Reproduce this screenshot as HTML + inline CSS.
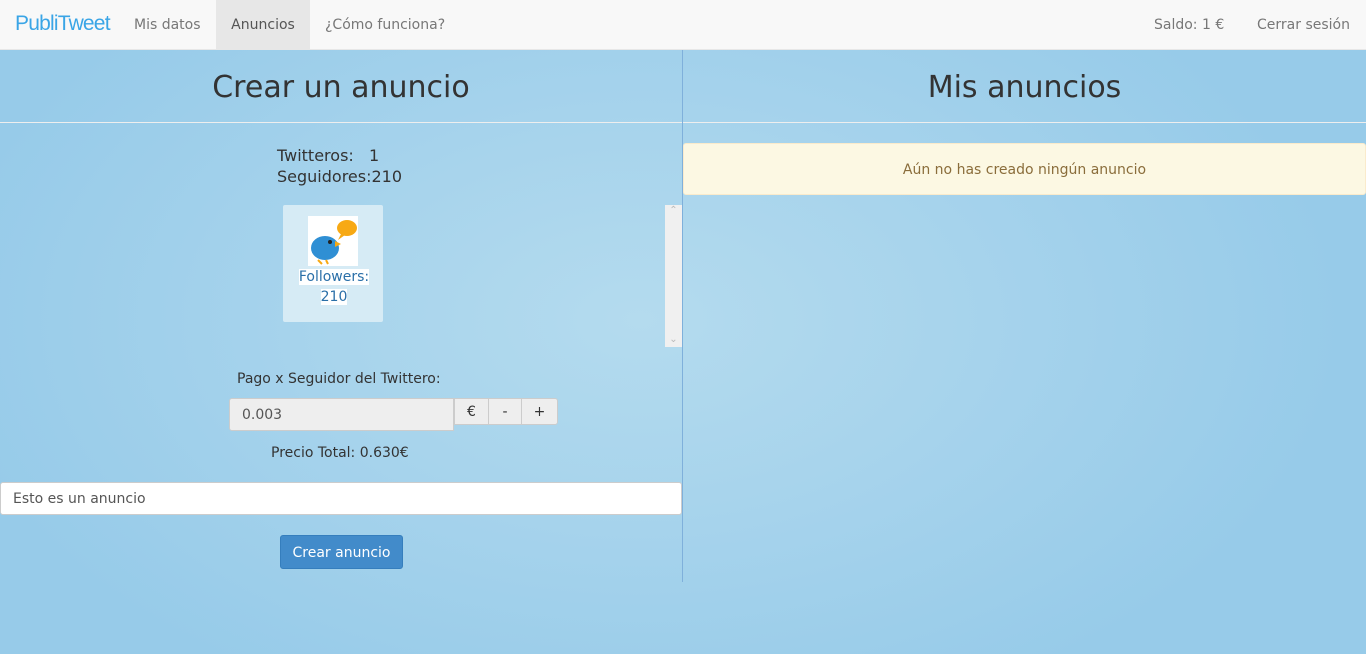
<!DOCTYPE html>
<html><head><meta charset="utf-8"><style>
*{box-sizing:border-box;margin:0;padding:0}
body{width:1366px;height:654px;overflow:hidden;font-family:"DejaVu Sans",sans-serif;color:#333;
background:radial-gradient(ellipse 700px 420px at 640px 320px,#b4dbee 0%,#a6d3ec 50%,#97cbe9 100%);position:relative}
.nav{position:absolute;top:0;left:0;width:1366px;height:50px;background:#f8f8f8;border-bottom:1px solid #e7e7e7;font-size:14px;color:#777}
.nav span{position:absolute;top:17px}
.logo{left:15px;top:12px!important;font-family:"Liberation Sans",sans-serif;font-size:21px;color:#3aa5e6;letter-spacing:-0.8px}
.act{left:216px;width:94px;height:49px;background:#e7e7e7;top:0!important;color:#555;text-align:center;line-height:50px}
h1{position:absolute;font-weight:normal;font-size:30px;color:#333;top:70px}
.hr{position:absolute;top:122px;left:0;width:1366px;height:1px;background:#eee}
.vr{position:absolute;left:682px;top:50px;width:1px;height:532px;background:#7fb0db}
</style></head><body>
<div class="nav">
<span class="logo">PubliTweet</span>
<span style="left:134px">Mis datos</span>
<span class="act">Anuncios</span>
<span style="left:325px">¿Cómo funciona?</span>
<span style="left:1154px">Saldo: 1 €</span>
<span style="left:1257px">Cerrar sesión</span>
</div>
<h1 style="left:0;width:682px;text-align:center">Crear un anuncio</h1>
<h1 style="left:683px;width:683px;text-align:center">Mis anuncios</h1>
<div class="hr"></div>
<div class="vr"></div>
<div style="position:absolute;left:277px;top:145px;font-size:16px;line-height:21px">Twitteros:&nbsp;&nbsp;&nbsp;1<br>Seguidores:210</div>
<div style="position:absolute;left:283px;top:205px;width:100px;height:117px;background:#d6ebf5;border-radius:2px"></div>
<svg style="position:absolute;left:308px;top:216px" width="50" height="50"><rect width="50" height="50" fill="#fff"/><ellipse cx="39" cy="12" rx="10" ry="8" fill="#f7a914"/><path d="M33 18 L30 24 L37 19Z" fill="#f7a914"/><ellipse cx="17" cy="32" rx="14" ry="12" fill="#2f8fd4"/><circle cx="22" cy="26" r="2" fill="#222"/><path d="M27 25 L33 28 L27 31Z" fill="#f7a914"/><path d="M10 44 L14 48 M18 44 L20 48" stroke="#f7a914" stroke-width="2"/></svg>
<div style="position:absolute;left:294px;top:267px;width:80px;font-size:14px;color:#2a6fa8;text-align:center;line-height:20px"><span style="background:#fff">Followers:</span><br><span style="background:#fff">210</span></div>
<div style="position:absolute;left:665px;top:205px;width:17px;height:142px;background:#f0f0f0;color:#bbb;font-size:10px;text-align:center">⌃<div style="position:absolute;bottom:2px;width:17px">⌄</div></div>
<div style="position:absolute;left:237px;top:371px;font-size:14px">Pago x Seguidor del Twittero:</div>
<div style="position:absolute;left:229px;top:398px;width:225px;height:33px;background:#eee;border:1px solid #ccc;border-radius:3px 0 0 3px;font-size:14px;color:#555;padding:8px 12px">0.003</div>
<div style="position:absolute;left:454px;top:398px;width:104px;height:27px;background:#eee;border:1px solid #ccc;border-radius:0 3px 3px 0;font-size:14px;display:flex">
<div style="width:34px;text-align:center;line-height:26px;border-right:1px solid #ccc">€</div><div style="width:33px;text-align:center;line-height:26px;border-right:1px solid #ccc">-</div><div style="flex:1;text-align:center;line-height:26px">+</div></div>
<div style="position:absolute;left:271px;top:445px;font-size:14px">Precio Total: 0.630€</div>
<div style="position:absolute;left:0;top:482px;width:682px;height:33px;background:#fff;border:1px solid #ccc;border-radius:3px;font-size:14px;color:#555;padding:8px 12px">Esto es un anuncio</div>
<div style="position:absolute;left:280px;top:535px;width:123px;height:34px;background:#428bca;border:1px solid #357ebd;border-radius:3px;font-size:14px;color:#fff;text-align:center;line-height:34px">Crear anuncio</div>
<div style="position:absolute;left:683px;top:143px;width:683px;height:52px;background:#fcf8e3;border:1px solid #faebcc;border-radius:3px;font-size:14px;color:#8a6d3b;text-align:center;line-height:52px">Aún no has creado ningún anuncio</div>
</body></html>
